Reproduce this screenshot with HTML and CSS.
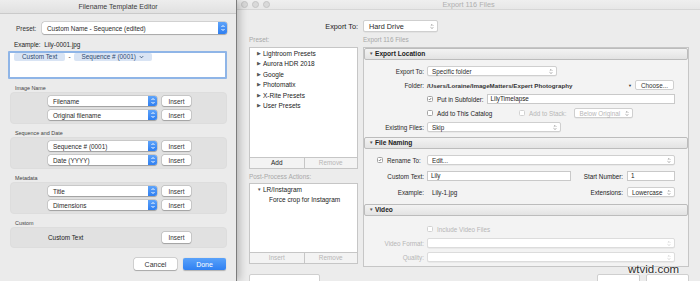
FILE: index.html
```html
<!DOCTYPE html>
<html lang="en">
<head>
  <meta charset="UTF-8" />
  <meta name="viewport" content="width=device-width, initial-scale=1.0" />
  <title>Export 116 Files</title>
  <link rel="stylesheet" href="styles.css">
</head>
<body>
<div class="screen">

  <!-- Filename Template Editor sheet -->
  <div class="sheet">
    <div class="sheet-title">Filename Template Editor</div>
    <div class="sheet-body">

      <div class="preset-row">
        <span class="preset-label">Preset:</span>
        <div class="pop pop-wide">Custom Name - Sequence (edited)<span class="step"><svg viewBox="0 0 8 10"><path d="M2.5 4 4 2.5 5.5 4M2.5 6 4 7.5 5.5 6"/></svg></span></div>
      </div>

      <div class="example">Example:&nbsp; Lily-0001.jpg</div>

      <div class="token-box">
        <span class="token">Custom Text</span><span class="dash">-</span><span class="token">Sequence # (0001) <svg class="chev" viewBox="0 0 6 4"><path d="M1 1 3 3 5 1"/></svg></span>
      </div>

      <div class="grp-label">Image Name</div>
      <div class="grp">
        <div class="grp-row">
          <div class="pop">Filename<span class="step"><svg viewBox="0 0 8 10"><path d="M2.5 4 4 2.5 5.5 4M2.5 6 4 7.5 5.5 6"/></svg></span></div>
          <button class="btn">Insert</button>
        </div>
        <div class="grp-row">
          <div class="pop">Original filename<span class="step"><svg viewBox="0 0 8 10"><path d="M2.5 4 4 2.5 5.5 4M2.5 6 4 7.5 5.5 6"/></svg></span></div>
          <button class="btn">Insert</button>
        </div>
      </div>

      <div class="grp-label">Sequence and Date</div>
      <div class="grp">
        <div class="grp-row">
          <div class="pop">Sequence # (0001)<span class="step"><svg viewBox="0 0 8 10"><path d="M2.5 4 4 2.5 5.5 4M2.5 6 4 7.5 5.5 6"/></svg></span></div>
          <button class="btn">Insert</button>
        </div>
        <div class="grp-row">
          <div class="pop">Date (YYYY)<span class="step"><svg viewBox="0 0 8 10"><path d="M2.5 4 4 2.5 5.5 4M2.5 6 4 7.5 5.5 6"/></svg></span></div>
          <button class="btn">Insert</button>
        </div>
      </div>

      <div class="grp-label">Metadata</div>
      <div class="grp">
        <div class="grp-row">
          <div class="pop">Title<span class="step"><svg viewBox="0 0 8 10"><path d="M2.5 4 4 2.5 5.5 4M2.5 6 4 7.5 5.5 6"/></svg></span></div>
          <button class="btn">Insert</button>
        </div>
        <div class="grp-row">
          <div class="pop">Dimensions<span class="step"><svg viewBox="0 0 8 10"><path d="M2.5 4 4 2.5 5.5 4M2.5 6 4 7.5 5.5 6"/></svg></span></div>
          <button class="btn">Insert</button>
        </div>
      </div>

      <div class="grp-label">Custom</div>
      <div class="grp grp-custom">
        <div class="grp-row">
          <span class="custom-name">Custom Text</span>
          <button class="btn">Insert</button>
        </div>
      </div>

      <div class="actions">
        <button class="btn btn-lg">Cancel</button>
        <button class="btn btn-lg btn-blue">Done</button>
      </div>
    </div>
  </div>

  <!-- Export dialog behind the sheet -->
  <div class="win">
    <div class="win-title">
      <div class="lights"><i></i><i></i><i></i></div>
      <div class="win-name">Export 116 Files</div>
    </div>

    <div class="win-body">
      <div class="export-row">
        <span class="export-label">Export To:</span>
        <div class="rpop rpop-top">Hard Drive<svg class="ud" viewBox="0 0 5 8"><path d="M1 3 2.5 1.5 4 3M1 5 2.5 6.5 4 5"/></svg></div>
      </div>

      <div class="cols">
        <div class="side">
          <div class="cap">Preset:</div>
          <div class="list list-presets">
            <div class="tree"><span class="tri">▶</span>Lightroom Presets</div>
            <div class="tree"><span class="tri">▶</span>Aurora HDR 2018</div>
            <div class="tree"><span class="tri">▶</span>Google</div>
            <div class="tree"><span class="tri">▶</span>Photomatix</div>
            <div class="tree"><span class="tri">▶</span>X-Rite Presets</div>
            <div class="tree"><span class="tri">▶</span>User Presets</div>
          </div>
          <div class="list-btns"><span>Add</span><span class="off">Remove</span></div>

          <div class="cap cap-post">Post-Process Actions:</div>
          <div class="list list-post">
            <div class="tree"><span class="tri">▼</span>LR/Instagram</div>
            <div class="tree tree-child">Force crop for Instagram</div>
          </div>
          <div class="list-btns"><span class="off">Insert</span><span class="off">Remove</span></div>
        </div>

        <div class="main">
          <div class="cap">Export 116 Files</div>
          <div class="panel">

            <div class="sec-head"><span class="tri">▼</span>Export Location</div>
            <div class="sec sec-location">
              <div class="row">
                <span class="lbl">Export To:</span>
                <div class="ctl"><div class="rpop w-folder">Specific folder<svg class="ud" viewBox="0 0 5 8"><path d="M1 3 2.5 1.5 4 3M1 5 2.5 6.5 4 5"/></svg></div></div>
              </div>
              <div class="row">
                <span class="lbl">Folder:</span>
                <div class="ctl">
                  <span class="path">/Users/Loraine/ImageMatters/Expert Photography</span>
                  <span class="drop">▼</span>
                  <button class="rbtn">Choose...</button>
                </div>
              </div>
              <div class="row">
                <span class="lbl"></span>
                <div class="ctl">
                  <span class="cb on"><svg viewBox="0 0 6 6"><path d="M1.2 3.1 2.5 4.4 4.9 1.4"/></svg></span>
                  <span>Put in Subfolder:</span>
                  <div class="field grow">LilyTimelapse</div>
                </div>
              </div>
              <div class="row">
                <span class="lbl"></span>
                <div class="ctl">
                  <span class="cb"></span>
                  <span class="catalog">Add to This Catalog</span>
                  <span class="cb dim"></span>
                  <span class="off">Add to Stack:</span>
                  <div class="rpop w-stack off">Below Original<svg class="ud" viewBox="0 0 5 8"><path d="M1 3 2.5 1.5 4 3M1 5 2.5 6.5 4 5"/></svg></div>
                </div>
              </div>
              <div class="row">
                <span class="lbl">Existing Files:</span>
                <div class="ctl"><div class="rpop w-skip">Skip<svg class="ud" viewBox="0 0 5 8"><path d="M1 3 2.5 1.5 4 3M1 5 2.5 6.5 4 5"/></svg></div></div>
              </div>
            </div>

            <div class="sec-head"><span class="tri">▼</span>File Naming</div>
            <div class="sec sec-naming">
              <div class="row">
                <span class="lbl lbl-check"><span class="cb on"><svg viewBox="0 0 6 6"><path d="M1.2 3.1 2.5 4.4 4.9 1.4"/></svg></span>Rename To:</span>
                <div class="ctl"><div class="rpop grow">Edit...<svg class="ud" viewBox="0 0 5 8"><path d="M1 3 2.5 1.5 4 3M1 5 2.5 6.5 4 5"/></svg></div></div>
              </div>
              <div class="row">
                <span class="lbl">Custom Text:</span>
                <div class="ctl">
                  <div class="field w-custom">Lily</div>
                  <span class="push">Start Number:</span>
                  <div class="field w-small">1</div>
                </div>
              </div>
              <div class="row">
                <span class="lbl">Example:</span>
                <div class="ctl">
                  <span class="sample">Lily-1.jpg</span>
                  <span class="push">Extensions:</span>
                  <div class="rpop w-small">Lowercase<svg class="ud" viewBox="0 0 5 8"><path d="M1 3 2.5 1.5 4 3M1 5 2.5 6.5 4 5"/></svg></div>
                </div>
              </div>
            </div>

            <div class="sec-head"><span class="tri">▼</span>Video</div>
            <div class="sec sec-video">
              <div class="row">
                <span class="lbl"></span>
                <div class="ctl"><span class="cb dim"></span><span class="off">Include Video Files</span></div>
              </div>
              <div class="row">
                <span class="lbl off">Video Format:</span>
                <div class="ctl"><div class="rpop grow dis"><svg class="ud" viewBox="0 0 5 8"><path d="M1 3 2.5 1.5 4 3M1 5 2.5 6.5 4 5"/></svg></div></div>
              </div>
              <div class="row">
                <span class="lbl off">Quality:</span>
                <div class="ctl"><div class="rpop grow dis"><svg class="ud" viewBox="0 0 5 8"><path d="M1 3 2.5 1.5 4 3M1 5 2.5 6.5 4 5"/></svg></div></div>
              </div>
            </div>

          </div>
        </div>
      </div>

      <div class="win-foot">
        <button class="rbtn foot-left"></button>
        <button class="rbtn foot-btn"></button>
        <button class="rbtn foot-btn"></button>
      </div>
    </div>

    <div class="watermark">wtvid.com</div>
  </div>

</div>
</body>
</html>
```

FILE: styles.css
```css
* {
  box-sizing: border-box;
}

body {
  margin: 0;
  width: 700px;
  height: 281px;
  overflow: hidden;
  background: #ececec;
  color: #222;
  font-family: 'Liberation Sans', Arial, sans-serif;
}

button {
  font-family: inherit;
  padding: 0;
  cursor: default;
}

.screen {
  display: flex;
  height: 281px;
}

/* ---------- Filename Template Editor ---------- */

.sheet {
  position: relative;
  z-index: 2;
  flex: none;
  width: 237px;
  background: #ebebeb;
  border-right: 1px solid #7c7c7c;
  box-shadow: 3px 0 8px rgba(0, 0, 0, 0.22);
  font-size: 6.4px;
}

.sheet-title {
  height: 14px;
  line-height: 13px;
  text-align: center;
  font-size: 7px;
  color: #3c3c3c;
  background: linear-gradient(#ededed, #e1e1e1);
  border-bottom: 1px solid #cacaca;
}

.sheet-body {
  padding: 8px 9px 0 8px;
}

.preset-row {
  display: flex;
  align-items: center;
  height: 12px;
  padding-left: 8px;
}

.preset-label {
  width: 26px;
  color: #333;
}

.pop {
  display: flex;
  align-items: center;
  width: 109px;
  height: 10px;
  padding-left: 5px;
  background: #fff;
  border-radius: 2.5px;
  box-shadow: 0 0 0 0.5px rgba(0, 0, 0, 0.18), 0 0.5px 1px rgba(0, 0, 0, 0.22);
  color: #2a2a2a;
}

.pop-wide {
  flex: 1;
  height: 12px;
}

.step {
  display: flex;
  align-items: center;
  justify-content: center;
  width: 9px;
  height: 100%;
  margin-left: auto;
  background: linear-gradient(#5ea3f9, #2f7ff1);
  border-radius: 0 2.5px 2.5px 0;
}

.step svg {
  width: 8px;
  height: 10px;
  fill: none;
  stroke: #fff;
  stroke-width: 1;
}

.example {
  margin-top: 7px;
  padding-left: 6px;
  line-height: 8px;
  color: #222;
}

.token-box {
  display: flex;
  align-items: flex-start;
  height: 28px;
  margin-top: 2px;
  padding: 0 4px;
  background: #fff;
  border: 2px solid #8fb5e7;
  border-radius: 1px;
}

.token {
  display: inline-flex;
  align-items: center;
  gap: 3px;
  padding: 0 8px;
  line-height: 8px;
  background: #d9e4f4;
  border-radius: 2px;
  color: #2f4a70;
}

.chev {
  width: 5px;
  height: 4px;
  fill: none;
  stroke: #2f4a70;
  stroke-width: 1;
}

.dash {
  margin: 0 3px;
  line-height: 8px;
  color: #333;
}

.grp-label {
  margin-top: 5px;
  padding-left: 7px;
  line-height: 8px;
  font-size: 5.4px;
  color: #444;
}

.grp {
  display: flex;
  flex-direction: column;
  gap: 4px;
  margin-left: 2px;
  padding: 3px 0 3px 37px;
  background: #e1e1e1;
  border: 1px solid #dddddd;
  border-radius: 4px;
}

.grp-custom {
  padding-top: 4px;
  padding-bottom: 4px;
}

.grp-row {
  display: flex;
  align-items: center;
  gap: 5px;
}

.custom-name {
  width: 109px;
  color: #222;
}

.btn {
  width: 29px;
  height: 10px;
  border: none;
  border-radius: 2px;
  background: #fff;
  box-shadow: 0 0 0 0.5px rgba(0, 0, 0, 0.2), 0 0.5px 1px rgba(0, 0, 0, 0.2);
  font-size: 6.4px;
  color: #333;
}

.grp-custom .btn {
  height: 11px;
}

.actions {
  display: flex;
  justify-content: flex-end;
  gap: 6px;
  margin-top: 10px;
  padding-right: 1px;
}

.btn-lg {
  width: 43px;
  height: 12px;
  font-size: 7px;
}

.btn-blue {
  background: linear-gradient(#5aa2fa, #2f80f2);
  color: #fff;
  box-shadow: 0 0.5px 1px rgba(0, 0, 0, 0.25);
}

/* ---------- Export window ---------- */

.win {
  position: relative;
  flex: 1;
  display: flex;
  flex-direction: column;
  background: #ececec;
}

.win-title {
  display: grid;
  grid-template-columns: 1fr auto 1fr;
  align-items: center;
  height: 13px;
  background: linear-gradient(#efefef, #e7e7e7);
  border-bottom: 1px solid #d6d6d6;
}

.lights {
  display: flex;
  gap: 4px;
  padding-left: 4px;
}

.lights i {
  width: 7px;
  height: 7px;
  border-radius: 50%;
  background: #d9d9d9;
  border: 0.5px solid #c4c4c4;
}

.win-name {
  font-size: 7.3px;
  color: #b0b0b0;
}

.win-body {
  padding: 0 11px 0 12px;
  font-size: 6.4px;
}

.export-row {
  display: grid;
  grid-template-columns: 109px 1fr;
  column-gap: 5px;
  align-items: center;
  height: 12px;
  margin-top: 10px;
  font-size: 7.3px;
}

.export-label {
  text-align: right;
  color: #222;
}

.rpop {
  display: flex;
  align-items: center;
  height: 10px;
  padding: 0 3px 0 4px;
  background: #fff;
  border: 1px solid #cfcfcf;
  border-radius: 2px;
  box-shadow: 0 0.5px 0.5px rgba(0, 0, 0, 0.08);
  color: #2a2a2a;
}

.rpop-top {
  width: 75px;
  height: 12px;
  padding-left: 5px;
}

.ud {
  flex: none;
  width: 4px;
  height: 7px;
  margin-left: auto;
  fill: none;
  stroke: #666;
  stroke-width: 0.8;
}

.cols {
  display: grid;
  grid-template-columns: 109px 326px;
  column-gap: 5px;
  margin-top: 4px;
}

.side {
  display: flex;
  flex-direction: column;
}

.cap {
  line-height: 8px;
  margin-bottom: 3px;
  color: #a8a8a8;
  font-size: 6.4px;
}

.cap-post {
  margin-top: 4px;
  margin-bottom: 2px;
}

.list {
  background: #fff;
  border: 1px solid #c6c6c6;
  padding-top: 1px;
  font-size: 6.5px;
}

.list-presets {
  height: 111px;
}

.list-post {
  height: 70px;
}

.tree {
  line-height: 10.4px;
  padding-left: 7px;
  color: #222;
}

.tree-child {
  padding-left: 19px;
}

.tri {
  display: inline-block;
  width: 6px;
  font-size: 4.5px;
  color: #555;
  vertical-align: 1px;
}

.list-btns {
  display: grid;
  grid-template-columns: 1fr 1fr;
  height: 11px;
  background: #f3f3f3;
  border: 1px solid #c6c6c6;
  border-top: none;
  line-height: 10px;
  text-align: center;
}

.list-btns span + span {
  border-left: 1px solid #c6c6c6;
}

.off {
  color: #b6b6b6;
}

.main {
  display: flex;
  flex-direction: column;
}

.panel {
  display: flex;
  flex-direction: column;
  height: 220px;
  background: #f3f3f3;
  border: 1px solid #c6c6c6;
}

.sec-head {
  height: 12px;
  line-height: 10px;
  padding-left: 4px;
  background: linear-gradient(#f3f3f3, #e3e3e3);
  border: 1px solid #bcbcbc;
  border-radius: 2px;
  font-weight: bold;
  font-size: 6.6px;
  color: #222;
}

.sec {
  display: flex;
  flex-direction: column;
  padding-right: 13px;
  font-size: 6.3px;
}

.sec-location {
  height: 77px;
  gap: 4px;
  padding-top: 6px;
}

.sec-naming {
  height: 55px;
  gap: 6px;
  padding-top: 6px;
}

.sec-video {
  height: 50px;
  gap: 4px;
  padding-top: 8px;
}

.row {
  display: grid;
  grid-template-columns: 60px 1fr;
  column-gap: 3px;
  align-items: center;
  height: 10px;
}

.lbl {
  text-align: right;
  color: #2a2a2a;
}

.lbl.off {
  color: #b6b6b6;
}

.lbl-check {
  display: flex;
  align-items: center;
  padding-left: 13px;
  text-align: left;
}

.ctl {
  display: flex;
  align-items: center;
  height: 10px;
}

.grow {
  flex: 1;
}

.w-folder {
  width: 130px;
}

.w-skip {
  width: 134px;
}

.w-stack {
  width: 59px;
  margin-left: 8px;
}

.w-custom {
  width: 144px;
}

.w-small {
  width: 48px;
  margin-left: 4px;
}

.path {
  font-weight: bold;
  font-size: 6.2px;
  color: #333;
}

.drop {
  margin-left: auto;
  margin-right: 3px;
  font-size: 4px;
  color: #333;
}

.rbtn {
  height: 10px;
  background: #fff;
  border: 1px solid #cfcfcf;
  border-radius: 2px;
  font-size: 6.3px;
  color: #333;
}

.ctl .rbtn {
  width: 39px;
  margin-right: 1px;
}

.cb {
  display: inline-flex;
  flex: none;
  width: 6px;
  height: 6px;
  margin-right: 4px;
  background: #fff;
  border: 0.8px solid #a4a4a4;
  border-radius: 1.5px;
}

.cb svg {
  width: 100%;
  height: 100%;
  fill: none;
  stroke: #4a4a4a;
  stroke-width: 1;
}

.cb.dim {
  border-color: #d2d2d2;
}

.catalog {
  width: 82px;
}

.field {
  height: 10px;
  line-height: 8px;
  padding-left: 3px;
  background: #fff;
  border: 1px solid #c9c9c9;
  color: #222;
}

.ctl .field.grow {
  margin-left: 3px;
}

.push {
  margin-left: auto;
}

.sample {
  margin-left: 5px;
}

.rpop.dis {
  border-color: #dcdcdc;
}

.rpop.dis .ud {
  stroke: #bbb;
}

.win-foot {
  display: flex;
  gap: 6px;
  margin-top: 7px;
}

.foot-left {
  width: 71px;
  height: 12px;
}

.foot-btn {
  width: 43px;
  height: 12px;
}

.foot-left + .foot-btn {
  margin-left: auto;
}

.watermark {
  position: absolute;
  left: 391px;
  top: 262px;
  font-size: 11.5px;
  line-height: 14px;
  color: #2e2e2e;
  text-shadow: 0 0 2px #fff, 0 0 2px #fff;
}
```
